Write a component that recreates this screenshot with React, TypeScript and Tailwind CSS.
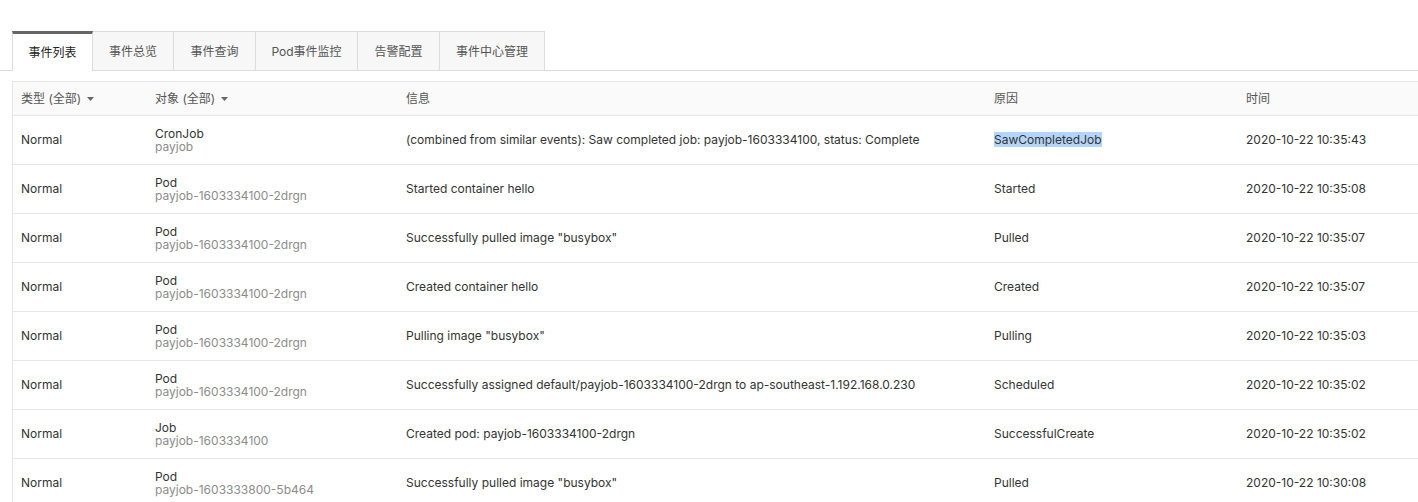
import React from 'react';

const tabs = [
  { label: '事件列表', w: 'w-[81px]', active: true },
  { label: '事件总览', w: 'w-[81px]' },
  { label: '事件查询', w: 'w-[82px]' },
  { label: 'Pod事件监控', w: 'w-[102px]' },
  { label: '告警配置', w: 'w-[82px]' },
  { label: '事件中心管理', w: 'w-[105px]' },
];

const rows = [
  { kind: 'CronJob', name: 'payjob', msg: '(combined from similar events): Saw completed job: payjob-1603334100, status: Complete', reason: 'SawCompletedJob', time: '2020-10-22 10:35:43', selected: true },
  { kind: 'Pod', name: 'payjob-1603334100-2drgn', msg: 'Started container hello', reason: 'Started', time: '2020-10-22 10:35:08' },
  { kind: 'Pod', name: 'payjob-1603334100-2drgn', msg: 'Successfully pulled image "busybox"', reason: 'Pulled', time: '2020-10-22 10:35:07' },
  { kind: 'Pod', name: 'payjob-1603334100-2drgn', msg: 'Created container hello', reason: 'Created', time: '2020-10-22 10:35:07' },
  { kind: 'Pod', name: 'payjob-1603334100-2drgn', msg: 'Pulling image "busybox"', reason: 'Pulling', time: '2020-10-22 10:35:03' },
  { kind: 'Pod', name: 'payjob-1603334100-2drgn', msg: 'Successfully assigned default/payjob-1603334100-2drgn to ap-southeast-1.192.168.0.230', reason: 'Scheduled', time: '2020-10-22 10:35:02' },
  { kind: 'Job', name: 'payjob-1603334100', msg: 'Created pod: payjob-1603334100-2drgn', reason: 'SuccessfulCreate', time: '2020-10-22 10:35:02' },
  { kind: 'Pod', name: 'payjob-1603333800-5b464', msg: 'Successfully pulled image "busybox"', reason: 'Pulled', time: '2020-10-22 10:30:08' },
];

const Caret = () => (
  <svg width="7" height="4" viewBox="0 0 7 4" className="ml-1.5 inline-block">
    <path d="M0 0h7L3.5 4z" fill="#666" />
  </svg>
);

const cols = 'grid grid-cols-[134px_251px_588px_252px_1fr]';

export default function App() {
  return (
    <div
      className="min-h-screen bg-white pt-[31px] text-[12px] text-[#333]"
      style={{ fontFamily: 'Inter, "Noto Sans CJK SC", sans-serif' }}
    >
      {/* tabs */}
      <div className="flex border-b border-[#dcdcdc] pl-3">
        {tabs.map((t) =>
          t.active ? (
            <div
              key={t.label}
              className={`${t.w} -mb-px flex h-10 items-center justify-center border-t-[3px] border-r border-l border-t-[#666] border-r-[#dcdcdc] border-l-[#dcdcdc] bg-white pt-[1px] text-[#222]`}
            >
              {t.label}
            </div>
          ) : (
            <div
              key={t.label}
              className={`${t.w} flex h-[39px] items-center justify-center border-t border-r border-[#dcdcdc] bg-[#f7f7f7] pt-0.5 text-[#555]`}
            >
              {t.label}
            </div>
          )
        )}
      </div>

      {/* table */}
      <div className="mt-[10px] ml-3 border-l border-t border-[#e6e6e6]">
        <div className={`${cols} h-[34px] items-center border-b border-[#e6e6e6] bg-[#fafafa] text-[#555]`}>
          <div className="flex items-center pl-[8px]">
            类型 (全部)<Caret />
          </div>
          <div className="flex items-center pl-[8px]">
            对象 (全部)<Caret />
          </div>
          <div className="pl-[8px]">信息</div>
          <div className="pl-[8px]">原因</div>
          <div className="pl-[8px]">时间</div>
        </div>
        {rows.map((r, i) => (
          <div key={i} className={`${cols} h-[49px] items-center border-b border-[#e6e6e6]`}>
            <div className="pl-[8px]">Normal</div>
            <div className="flex flex-col pl-[8px] leading-[13px]">
              <span>{r.kind}</span>
              <span className="text-[#8c8c8c]">{r.name}</span>
            </div>
            <div className="pl-[8px] whitespace-nowrap">{r.msg}</div>
            <div className="pl-[8px]">
              {r.selected ? <span className="bg-[#b4d5fb]">{r.reason}</span> : r.reason}
            </div>
            <div className="pl-[8px]">{r.time}</div>
          </div>
        ))}
      </div>
    </div>
  );
}
